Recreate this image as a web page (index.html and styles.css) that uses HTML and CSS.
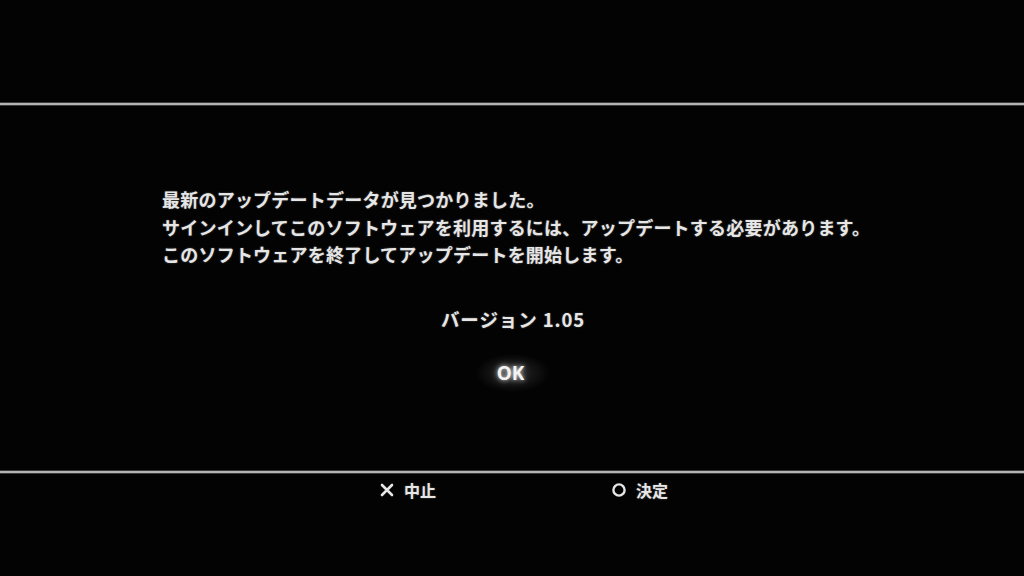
FILE: index.html
```html
<!DOCTYPE html>
<html lang="ja">
<head>
<meta charset="utf-8">
<link rel="stylesheet" href="styles.css">
</head>
<body>
<div class="screen">
  <div class="header"></div>
  <div class="rule"></div>
  <div class="main">
    <div class="message">
      <p>最新のアップデートデータが見つかりました。</p>
      <p>サインインしてこのソフトウェアを利用するには、アップデートする必要があります。</p>
      <p>このソフトウェアを終了してアップデートを開始します。</p>
    </div>
    <div class="version">バージョン 1.05</div>
    <div class="ok">OK</div>
  </div>
  <div class="rule"></div>
  <div class="footer">
    <div class="hint">
      <svg class="icon" viewBox="0 0 16 16" width="16" height="16"><path d="M3 3 L13 13 M13 3 L3 13" stroke="#e6e6e6" stroke-width="2.6" stroke-linecap="round" fill="none"/></svg>
      <span>中止</span>
    </div>
    <div class="hint">
      <svg class="icon" viewBox="0 0 16 16" width="16" height="16"><circle cx="8" cy="8" r="5.6" stroke="#e6e6e6" stroke-width="2.4" fill="none"/></svg>
      <span>決定</span>
    </div>
  </div>
</div>
</body>
</html>
```
FILE: styles.css
```css
html, body {
  margin: 0;
  padding: 0;
  background: #000;
}
.screen {
  width: 1024px;
  height: 576px;
  background: #030303;
  display: flex;
  flex-direction: column;
  font-family: "Noto Sans CJK JP", "Noto Sans", sans-serif;
  color: #e6e6e6;
  overflow: hidden;
}
.header {
  height: 102px;
}
.rule {
  height: 2px;
  background: #b4b4b4;
  border-top: 1px solid #3a3a3a;
  border-bottom: 1px solid #3a3a3a;
}
.main {
  height: 364px;
  display: flex;
  flex-direction: column;
  align-items: center;
  box-sizing: border-box;
  padding-top: 80px;
}
.message {
  align-self: stretch;
  padding-left: 162px;
}
.message p {
  margin: 0;
  font-size: 18px;
  line-height: 27.5px;
  font-weight: 700;
  letter-spacing: 0.22px;
  text-shadow: 0 0 2px rgba(255, 255, 255, 0.35);
}
.version {
  margin-top: 37px;
  font-size: 18.5px;
  line-height: 27.5px;
  font-weight: 700;
  letter-spacing: 0.9px;
  padding-left: 2px;
  text-shadow: 0 0 2px rgba(255, 255, 255, 0.35);
}
.ok {
  margin-top: 21px;
  width: 70px;
  height: 38px;
  line-height: 38px;
  text-align: center;
  font-family: "Noto Sans", sans-serif;
  font-size: 19px;
  font-weight: 700;
  color: #f2f2f2;
  padding-right: 3px;
  background: radial-gradient(ellipse at center, rgba(255,255,255,0.16) 0%, rgba(255,255,255,0.06) 45%, rgba(255,255,255,0) 72%);
  text-shadow: 0 0 4px rgba(255, 255, 255, 0.7), 0 0 8px rgba(255, 255, 255, 0.4);
}
.footer {
  display: flex;
  gap: 175px;
  padding-left: 379px;
  padding-top: 5px;
}
.hint {
  display: flex;
  align-items: center;
  gap: 9px;
  font-size: 16px;
  line-height: 22px;
  font-weight: 700;
  text-shadow: 0 0 2px rgba(255, 255, 255, 0.35);
}
.icon {
  display: block;
}
```
